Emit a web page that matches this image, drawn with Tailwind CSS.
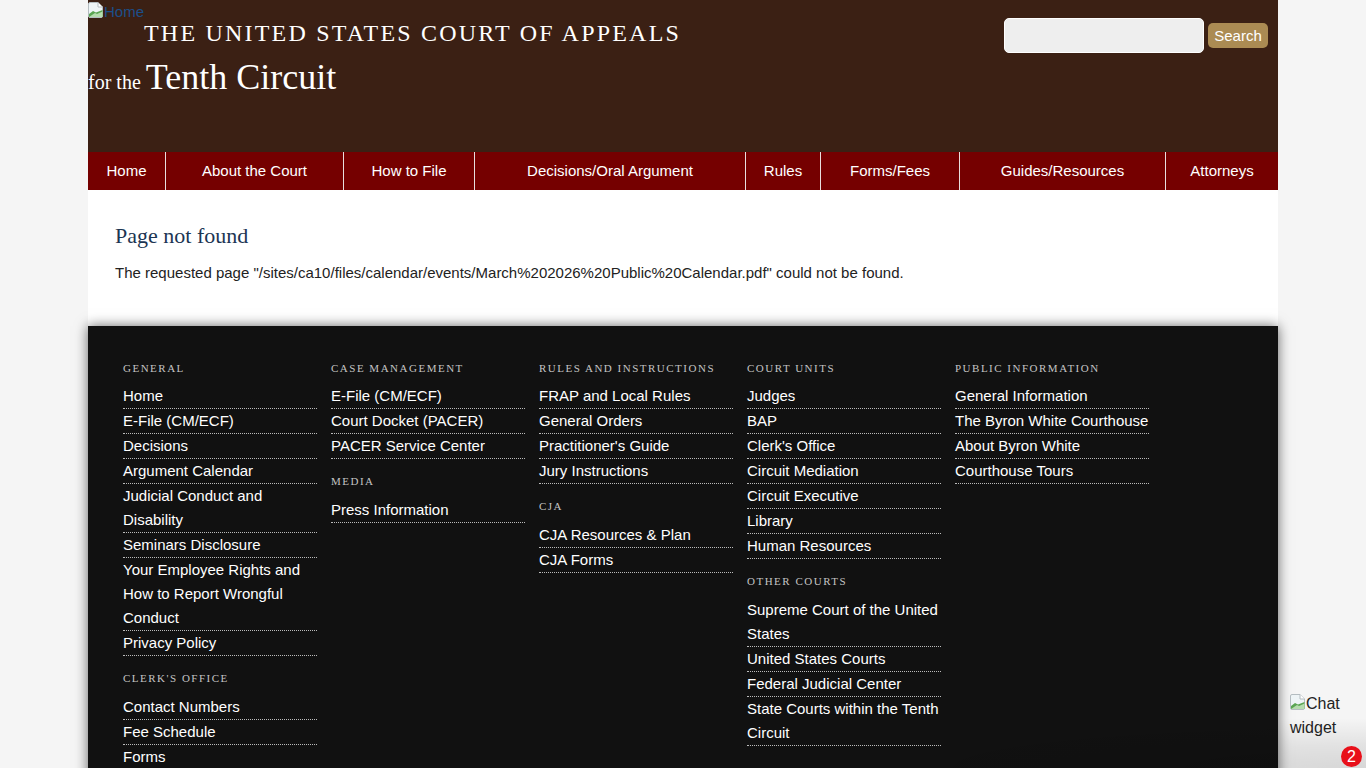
<!DOCTYPE html>
<html lang="en">
<head>
  <meta charset="UTF-8" />
  <meta name="viewport" content="width=device-width, initial-scale=1" />
  <title>Page not found | Tenth Circuit</title>
  <script src="https://cdn.jsdelivr.net/npm/@tailwindcss/browser@4"></script>
</head>
<body class="bg-[#f5f5f5] h-[768px] overflow-hidden relative font-['Liberation_Sans',Arial,sans-serif] text-[15px] leading-[24px] text-[#222]">

  <div class="w-[1190px] ml-[88px]">

    <!-- header -->
    <header class="bg-[#3b2014] h-[152px] flex justify-between">
      <div class="text-white font-['Liberation_Serif',serif]">
        <a href="#" class="flex items-center h-[24px] font-['Liberation_Sans',sans-serif] text-[15px] text-[#1b4f8a]">
          <svg width="16" height="16" viewBox="0 0 16 16" class="shrink-0 -mt-[4px]">
            <path d="M2 .5h8l4.500 4.500v9a1.500 1.500 0 0 1-1.500 1.500H2A1.500 1.500 0 0 1 .5 14V2A1.500 1.500 0 0 1 2 .5z" fill="#eef4f6" stroke="#b4bcc0"/>
            <path d="M10 .5V5h4.500" fill="#fff" stroke="#b4bcc0"/>
            <path d="M1 15v-3l4-3 3 1.500L14.500 8v7z" fill="#5aa552"/>
            <path d="M1 15l6-4 2 1 5.500-2.500V15z" fill="#b5dcae"/>
          </svg>
          Home
        </a>
        <div class="pl-[56px] h-[19px] text-[24px] leading-[19px] tracking-[2.2px] whitespace-nowrap">THE UNITED STATES COURT OF APPEALS</div>
        <div class="mt-[16px] flex items-baseline gap-[5px] leading-[36px]">
          <span class="text-[20px]">for the</span>
          <span class="text-[36px]">Tenth Circuit</span>
        </div>
      </div>
      <form class="flex items-center gap-[4px] h-[35px] mt-[18px] mr-[10px]">
        <input type="text" class="w-[200px] h-[35px] bg-[#eeeeee] border border-white rounded-[5px]" />
        <button type="button" class="bg-[#ab8b53] text-white rounded-[5px] w-[60px] h-[25px] text-[15px] leading-[25px]">Search</button>
      </form>
    </header>

    <!-- main nav -->
    <nav class="bg-[#750000] h-[38px] flex text-white text-[15px] leading-[38px] text-center">
      <a href="#" class="w-[78px] border-r border-[#e8dede]">Home</a>
      <a href="#" class="w-[178px] border-r border-[#e8dede]">About the Court</a>
      <a href="#" class="w-[131px] border-r border-[#e8dede]">How to File</a>
      <a href="#" class="w-[271px] border-r border-[#e8dede]">Decisions/Oral Argument</a>
      <a href="#" class="w-[75px] border-r border-[#e8dede]">Rules</a>
      <a href="#" class="w-[139px] border-r border-[#e8dede]">Forms/Fees</a>
      <a href="#" class="w-[206px] border-r border-[#e8dede]">Guides/Resources</a>
      <a href="#" class="flex-1">Attorneys</a>
    </nav>

    <!-- content -->
    <main class="bg-white h-[136px] pl-[27px] pt-[32px]">
      <h1 class="font-['Liberation_Serif',serif] text-[22px] leading-[28px] text-[#1c3553]">Page not found</h1>
      <p class="mt-[11px] text-[#222]">The requested page "/sites/ca10/files/calendar/events/March%202026%20Public%20Calendar.pdf" could not be found.</p>
    </main>

    <!-- footer -->
    <footer class="bg-[#111111] h-[600px] pl-[35px] pt-[33px] flex gap-[14px] text-white shadow-[0_0_12px_rgba(0,0,0,0.6)]">
      <div class="w-[194px]">
        <h2 class="font-['Liberation_Serif',serif] text-[11px] leading-[18px] tracking-[1.5px] uppercase text-[#c4c4c4]">General</h2>
        <ul class="mt-[7px]">
          <li class="border-b border-dotted border-[#bbb]"><a href="#">Home</a></li>
          <li class="border-b border-dotted border-[#bbb]"><a href="#">E-File (CM/ECF)</a></li>
          <li class="border-b border-dotted border-[#bbb]"><a href="#">Decisions</a></li>
          <li class="border-b border-dotted border-[#bbb]"><a href="#">Argument Calendar</a></li>
          <li class="border-b border-dotted border-[#bbb]"><a href="#">Judicial Conduct and Disability</a></li>
          <li class="border-b border-dotted border-[#bbb]"><a href="#">Seminars Disclosure</a></li>
          <li class="border-b border-dotted border-[#bbb]"><a href="#">Your Employee Rights and How to Report Wrongful Conduct</a></li>
          <li class="border-b border-dotted border-[#bbb]"><a href="#">Privacy Policy</a></li>
        </ul>
        <h2 class="mt-[13px] font-['Liberation_Serif',serif] text-[11px] leading-[18px] tracking-[1.5px] uppercase text-[#c4c4c4]">Clerk's Office</h2>
        <ul class="mt-[8px]">
          <li class="border-b border-dotted border-[#bbb]"><a href="#">Contact Numbers</a></li>
          <li class="border-b border-dotted border-[#bbb]"><a href="#">Fee Schedule</a></li>
          <li class="border-b border-dotted border-[#bbb]"><a href="#">Forms</a></li>
        </ul>
      </div>
      <div class="w-[194px]">
        <h2 class="font-['Liberation_Serif',serif] text-[11px] leading-[18px] tracking-[1.5px] uppercase text-[#c4c4c4]">Case Management</h2>
        <ul class="mt-[7px]">
          <li class="border-b border-dotted border-[#bbb]"><a href="#">E-File (CM/ECF)</a></li>
          <li class="border-b border-dotted border-[#bbb]"><a href="#">Court Docket (PACER)</a></li>
          <li class="border-b border-dotted border-[#bbb]"><a href="#">PACER Service Center</a></li>
        </ul>
        <h2 class="mt-[13px] font-['Liberation_Serif',serif] text-[11px] leading-[18px] tracking-[1.5px] uppercase text-[#c4c4c4]">Media</h2>
        <ul class="mt-[8px]">
          <li class="border-b border-dotted border-[#bbb]"><a href="#">Press Information</a></li>
        </ul>
      </div>
      <div class="w-[194px]">
        <h2 class="font-['Liberation_Serif',serif] text-[11px] leading-[18px] tracking-[1.5px] uppercase text-[#c4c4c4]">Rules and Instructions</h2>
        <ul class="mt-[7px]">
          <li class="border-b border-dotted border-[#bbb]"><a href="#">FRAP and Local Rules</a></li>
          <li class="border-b border-dotted border-[#bbb]"><a href="#">General Orders</a></li>
          <li class="border-b border-dotted border-[#bbb]"><a href="#">Practitioner's Guide</a></li>
          <li class="border-b border-dotted border-[#bbb]"><a href="#">Jury Instructions</a></li>
        </ul>
        <h2 class="mt-[13px] font-['Liberation_Serif',serif] text-[11px] leading-[18px] tracking-[1.5px] uppercase text-[#c4c4c4]">CJA</h2>
        <ul class="mt-[8px]">
          <li class="border-b border-dotted border-[#bbb]"><a href="#">CJA Resources &amp; Plan</a></li>
          <li class="border-b border-dotted border-[#bbb]"><a href="#">CJA Forms</a></li>
        </ul>
      </div>
      <div class="w-[194px]">
        <h2 class="font-['Liberation_Serif',serif] text-[11px] leading-[18px] tracking-[1.5px] uppercase text-[#c4c4c4]">Court Units</h2>
        <ul class="mt-[7px]">
          <li class="border-b border-dotted border-[#bbb]"><a href="#">Judges</a></li>
          <li class="border-b border-dotted border-[#bbb]"><a href="#">BAP</a></li>
          <li class="border-b border-dotted border-[#bbb]"><a href="#">Clerk's Office</a></li>
          <li class="border-b border-dotted border-[#bbb]"><a href="#">Circuit Mediation</a></li>
          <li class="border-b border-dotted border-[#bbb]"><a href="#">Circuit Executive</a></li>
          <li class="border-b border-dotted border-[#bbb]"><a href="#">Library</a></li>
          <li class="border-b border-dotted border-[#bbb]"><a href="#">Human Resources</a></li>
        </ul>
        <h2 class="mt-[13px] font-['Liberation_Serif',serif] text-[11px] leading-[18px] tracking-[1.5px] uppercase text-[#c4c4c4]">Other Courts</h2>
        <ul class="mt-[8px]">
          <li class="border-b border-dotted border-[#bbb]"><a href="#">Supreme Court of the United States</a></li>
          <li class="border-b border-dotted border-[#bbb]"><a href="#">United States Courts</a></li>
          <li class="border-b border-dotted border-[#bbb]"><a href="#">Federal Judicial Center</a></li>
          <li class="border-b border-dotted border-[#bbb]"><a href="#">State Courts within the Tenth Circuit</a></li>
        </ul>
      </div>
      <div class="w-[194px]">
        <h2 class="font-['Liberation_Serif',serif] text-[11px] leading-[18px] tracking-[1.5px] uppercase text-[#c4c4c4]">Public Information</h2>
        <ul class="mt-[7px]">
          <li class="border-b border-dotted border-[#bbb]"><a href="#">General Information</a></li>
          <li class="border-b border-dotted border-[#bbb]"><a href="#">The Byron White Courthouse</a></li>
          <li class="border-b border-dotted border-[#bbb]"><a href="#">About Byron White</a></li>
          <li class="border-b border-dotted border-[#bbb]"><a href="#">Courthouse Tours</a></li>
        </ul>
      </div>
    </footer>
  </div>

  <!-- chat widget -->
  <div class="absolute right-0 bottom-0 w-[520px] h-[50px] pointer-events-none bg-[radial-gradient(ellipse_520px_50px_at_100%_100%,rgba(0,0,0,0.12),rgba(0,0,0,0.08)_45%,rgba(0,0,0,0)_100%)]"></div>
  <div class="absolute left-[1290px] top-[692px] w-[60px] text-[#222] text-[16px] leading-[24px]">
    <svg width="16" height="16" viewBox="0 0 16 16" class="inline-block align-[-1px]">
      <path d="M2 .5h8l4.500 4.500v9a1.500 1.500 0 0 1-1.500 1.500H2A1.500 1.500 0 0 1 .5 14V2A1.500 1.500 0 0 1 2 .5z" fill="#eef4f6" stroke="#b4bcc0"/>
      <path d="M10 .5V5h4.500" fill="#fff" stroke="#b4bcc0"/>
      <path d="M1 15v-3l4-3 3 1.500L14.500 8v7z" fill="#5aa552"/>
      <path d="M1 15l6-4 2 1 5.500-2.500V15z" fill="#b5dcae"/>
    </svg>Chat widget
  </div>
  <div class="absolute left-[1341px] top-[746px] w-[21px] h-[21px] rounded-full bg-[#e8101a] text-white text-[16px] leading-[21px] text-center">2</div>

</body>
</html>
